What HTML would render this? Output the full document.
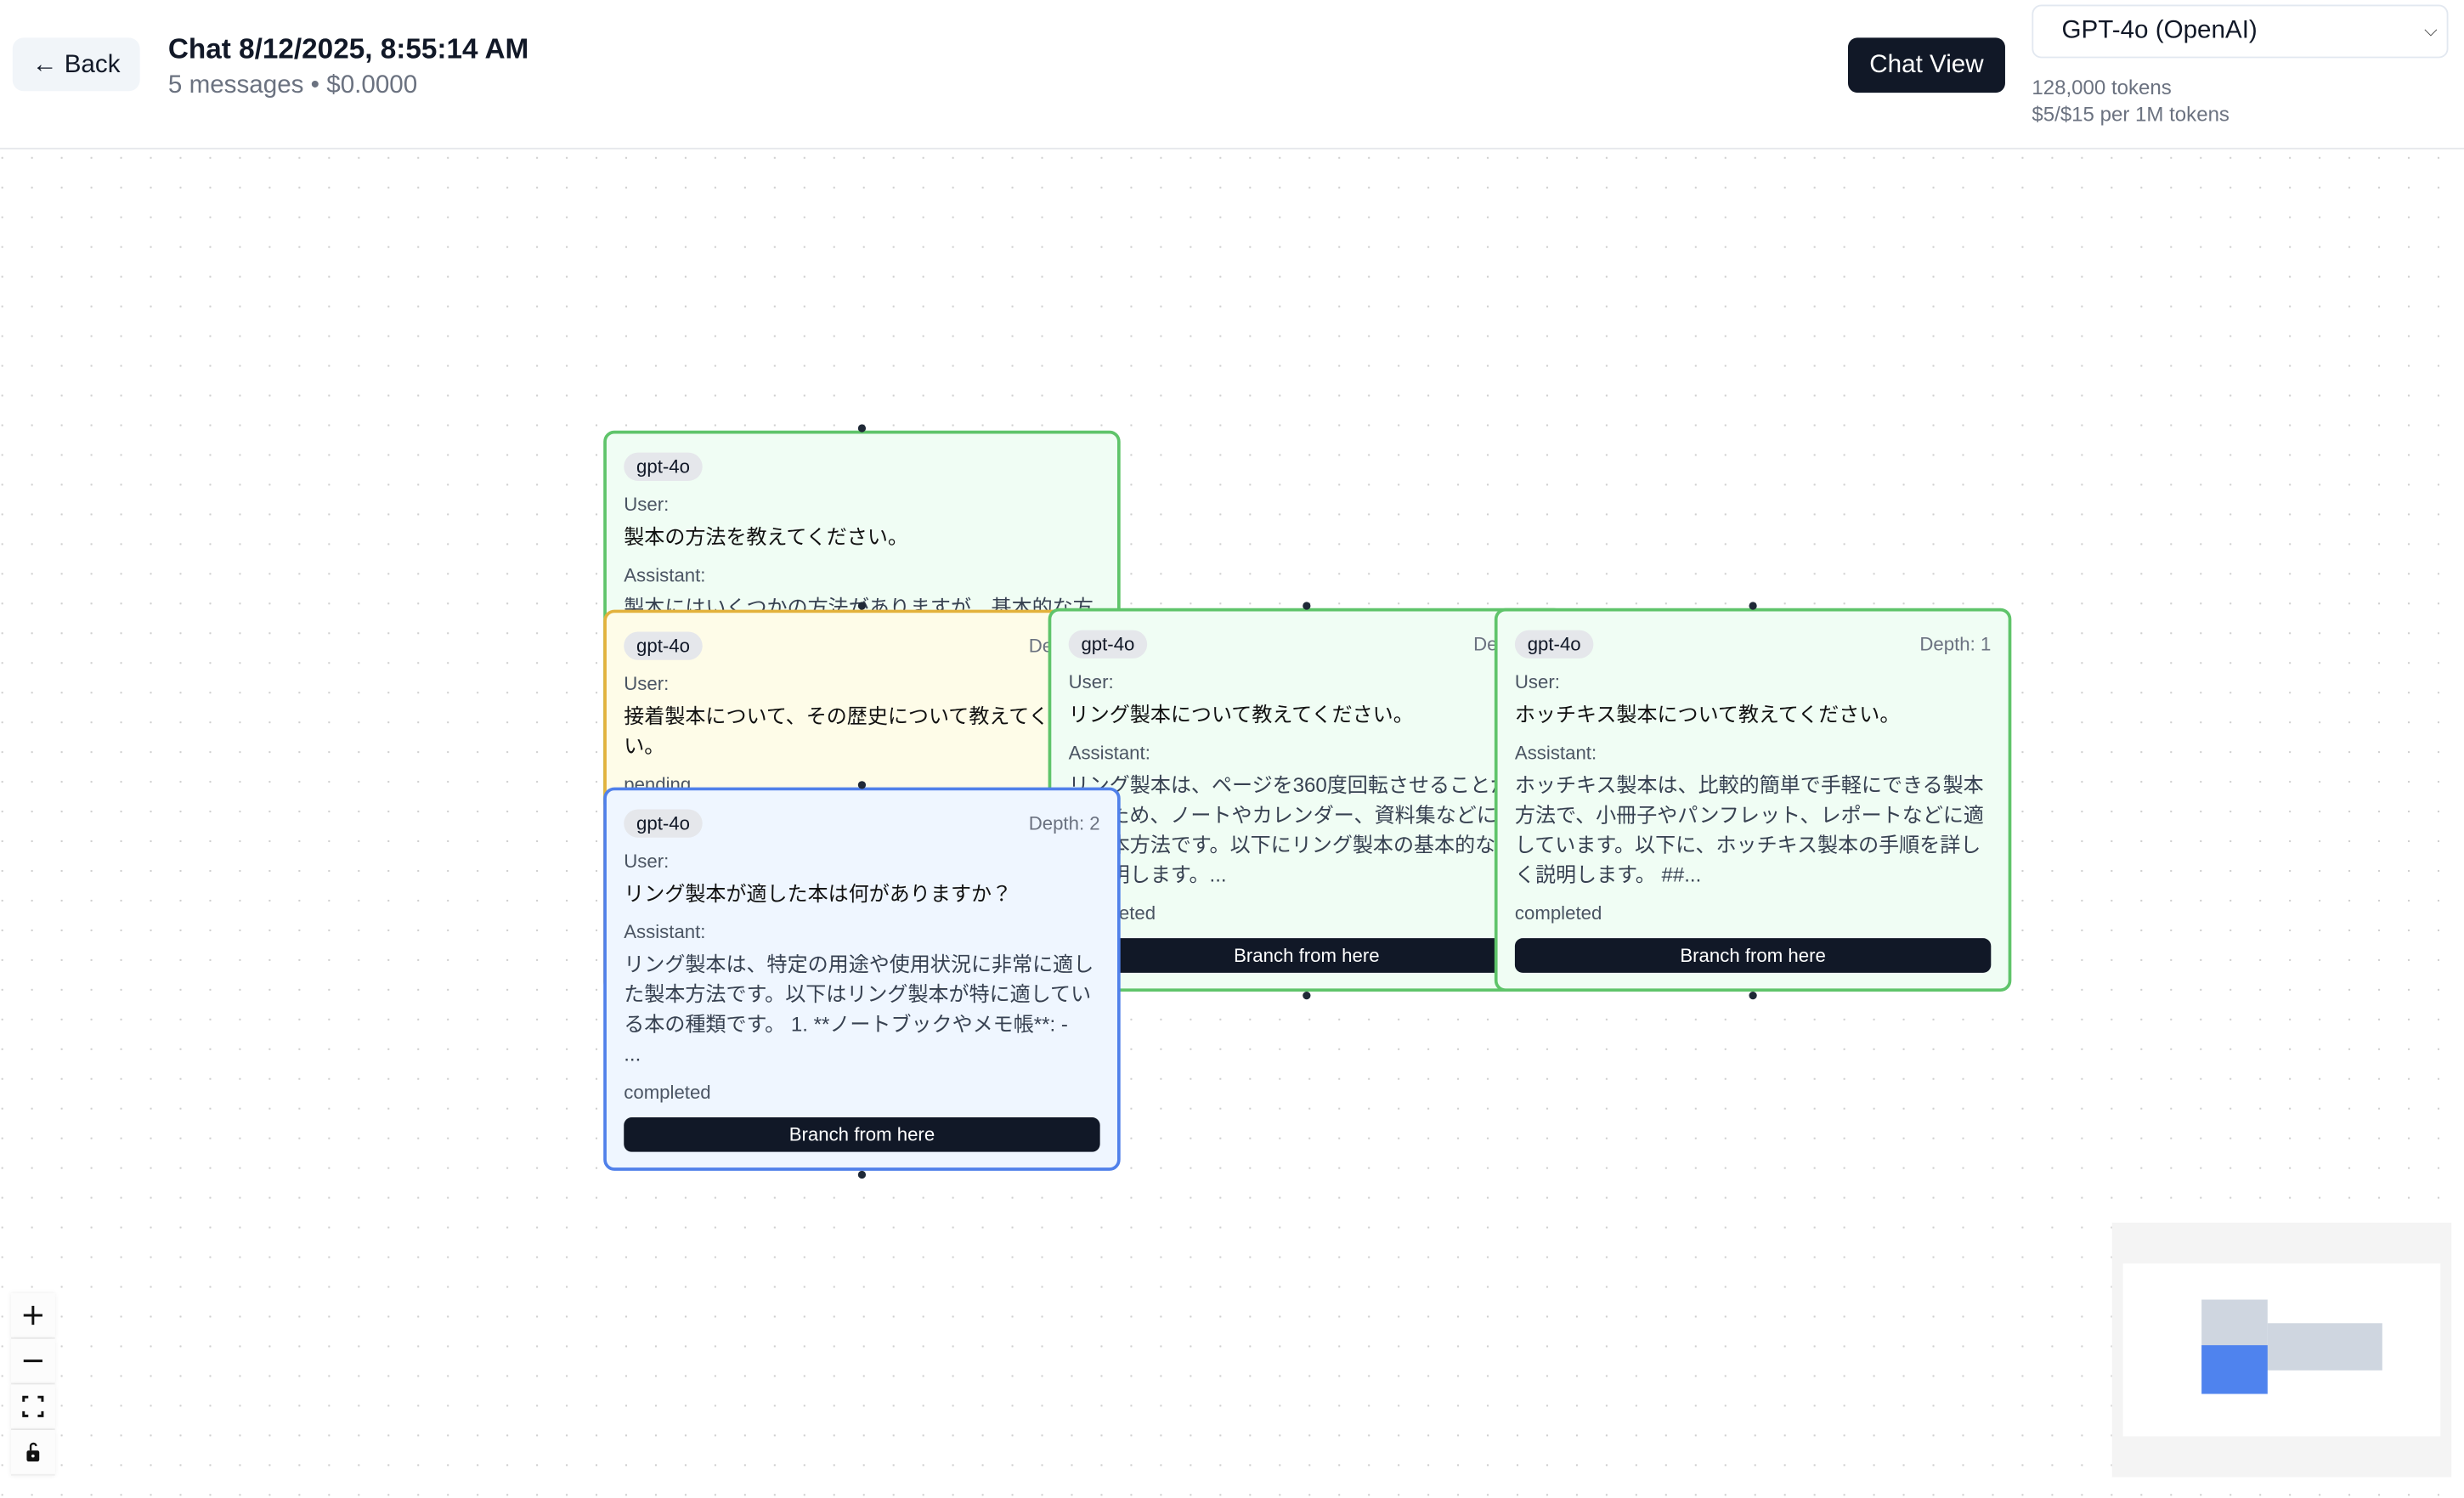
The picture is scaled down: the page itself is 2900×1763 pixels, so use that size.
<!DOCTYPE html>
<html><head><meta charset="utf-8"><style>
html,body{margin:0;padding:0;width:2900px;height:1762px;overflow:hidden;background:#fff}
#s{position:absolute;left:0;top:0;width:1568px;height:953px;transform:scale(1.84949);transform-origin:0 0;font-family:"Liberation Sans","Noto Sans CJK JP",sans-serif;color:#111827}
.hdr{position:absolute;left:0;top:0;width:1568px;height:94px;border-bottom:1px solid #e5e7eb;background:#fff}
.canvas{position:absolute;left:0;top:95px;width:1568px;height:858px;background-image:radial-gradient(circle,#cfcfcf 0.6px,transparent 0.7px);background-size:18.92px 18.92px;background-position:-8px -4px}
.back{position:absolute;left:8px;top:24px;width:81px;height:34px;background:#f1f5f9;border-radius:7px;font-size:16px;line-height:36px;text-align:center;font-weight:500}
.title{position:absolute;left:107px;top:21px;font-size:18px;font-weight:700}
.sub{position:absolute;left:107px;top:46px;font-size:16px;color:#6b7280}
.cv{position:absolute;left:1176px;top:24px;width:100px;height:35px;background:#111827;color:#fff;border-radius:6px;font-size:16px;line-height:35px;text-align:center;font-weight:500}
.sel{position:absolute;left:1293px;top:3px;width:265px;height:34px;border:1px solid #e2e8f0;border-radius:6px;box-sizing:border-box;font-size:16px;line-height:32px;padding-left:18px}
.sel span{position:absolute;right:6px;top:0;font-size:11px;color:#444}
.meta{position:absolute;left:1293px;top:47px;font-size:13px;color:#6b7280;line-height:17px}
.card{position:absolute;width:329px;height:244px;box-sizing:border-box;border:2px solid #5fc46a;border-radius:7px;background:#f0fdf4;padding:12px 11px;overflow:hidden;font-size:13px}
.y{background:#fefce8;border-color:#e3b23c}
.b{background:#eff6ff;border-color:#5080ea}
.badge{display:inline-block;background:#e5e7eb;border-radius:9px;font-size:12px;padding:0 8px;height:18px;line-height:18px;font-weight:500}
.dep{position:absolute;right:11px;top:14px;font-size:12px;color:#6b7280}
.lbl{font-size:12px;color:#4b5563;font-weight:500;margin-top:7px;line-height:16px}
.txt{font-size:13px;line-height:19px;margin-top:3px;color:#111}
.at{color:#374151}
.st{font-size:12px;color:#4b5563;margin-top:7px;line-height:16px;font-weight:500}
.btn{margin-top:8px;height:22px;background:#111827;color:#fff;border-radius:5px;text-align:center;font-size:12px;line-height:22px;font-weight:500}
.h{position:absolute;width:5px;height:5px;border-radius:50%;background:#1f2937}
.ctl{position:absolute;left:7px;width:28px;height:28px;background:#fcfcfc;border-bottom:1px solid #eee;box-shadow:0 0 3px rgba(0,0,0,.08)}
.ctl svg{position:absolute;left:7px;top:7px}
</style></head><body><div id="s">
<div class="hdr">
<div class="back">← Back</div>
<div class="title">Chat 8/12/2025, 8:55:14 AM</div>
<div class="sub">5 messages • $0.0000</div>
<div class="cv">Chat View</div>
<div class="sel">GPT-4o (OpenAI)<span>⌵</span></div>
<div class="meta">128,000 tokens<br>$5/$15 per 1M tokens</div>
</div>
<div class="canvas"></div>

<div class="card" style="left:384px;top:274px"><span class="badge">gpt-4o</span>
<div class="lbl">User:</div><div class="txt">製本の方法を教えてください。</div>
<div class="lbl">Assistant:</div><div class="txt at">製本にはいくつかの方法がありますが、基本的な方</div></div>
<div class="h" style="left:546px;top:270px"></div>

<div class="card y" style="left:384px;top:388px"><span class="badge">gpt-4o</span><div class="dep">Depth: 2</div>
<div class="lbl">User:</div><div class="txt">接着製本について、その歴史について教えてください。</div>
<div class="st">pending</div></div>
<div class="h" style="left:546px;top:383px"></div>

<div class="card" style="left:667px;top:387px"><span class="badge">gpt-4o</span><div class="dep">Depth: 1</div>
<div class="lbl">User:</div><div class="txt">リング製本について教えてください。</div>
<div class="lbl">Assistant:</div><div class="txt at">リング製本は、ページを360度回転させることができるため、ノートやカレンダー、資料集などに適した製本方法です。以下にリング製本の基本的な手順を説明します。...</div>
<div class="st">completed</div><div class="btn">Branch from here</div></div>
<div class="h" style="left:829px;top:383px"></div><div class="h" style="left:829px;top:631px"></div>

<div class="card" style="left:951px;top:387px"><span class="badge">gpt-4o</span><div class="dep">Depth: 1</div>
<div class="lbl">User:</div><div class="txt">ホッチキス製本について教えてください。</div>
<div class="lbl">Assistant:</div><div class="txt at">ホッチキス製本は、比較的簡単で手軽にできる製本方法で、小冊子やパンフレット、レポートなどに適しています。以下に、ホッチキス製本の手順を詳しく説明します。 ##...</div>
<div class="st">completed</div><div class="btn">Branch from here</div></div>
<div class="h" style="left:1113px;top:383px"></div><div class="h" style="left:1113px;top:631px"></div>

<div class="card b" style="left:384px;top:501px"><span class="badge">gpt-4o</span><div class="dep">Depth: 2</div>
<div class="lbl">User:</div><div class="txt">リング製本が適した本は何がありますか？</div>
<div class="lbl">Assistant:</div><div class="txt at">リング製本は、特定の用途や使用状況に非常に適した製本方法です。以下はリング製本が特に適している本の種類です。 1. **ノートブックやメモ帳**: -<br>...</div>
<div class="st">completed</div><div class="btn">Branch from here</div></div>
<div class="h" style="left:546px;top:497px"></div><div class="h" style="left:546px;top:745px"></div>

<div class="ctl" style="top:823px"><svg width="14" height="14"><path d="M7 1V13M1 7H13" stroke="#111" stroke-width="1.6"/></svg></div>
<div class="ctl" style="top:852px"><svg width="14" height="14"><path d="M1 7H13" stroke="#111" stroke-width="1.6"/></svg></div>
<div class="ctl" style="top:881px"><svg width="14" height="14"><path d="M1 4V1H4M10 1H13V4M13 10V13H10M4 13H1V10" stroke="#111" stroke-width="1.6" fill="none"/></svg></div>
<div class="ctl" style="top:910px"><svg width="14" height="14"><path d="M5.5 6V3.5A1.7 1.7 0 0 1 9 3.2" stroke="#111" stroke-width="1.3" fill="none"/><rect x="3" y="6" width="8" height="7" rx="1.2" fill="#111"/><circle cx="7" cy="9.5" r="1" fill="#fff"/></svg></div>

<div style="position:absolute;left:1344px;top:778px;width:216px;height:162px;background:#f4f4f4"></div>
<div style="position:absolute;left:1351px;top:804px;width:202px;height:110px;background:#fff"></div>
<div style="position:absolute;left:1401px;top:827px;width:42px;height:45px;background:#cfd6e0"></div>
<div style="position:absolute;left:1443px;top:842px;width:73px;height:30px;background:#cfd6e0"></div>
<div style="position:absolute;left:1401px;top:856px;width:42px;height:31px;background:#4f83ee"></div>
</div></body></html>
